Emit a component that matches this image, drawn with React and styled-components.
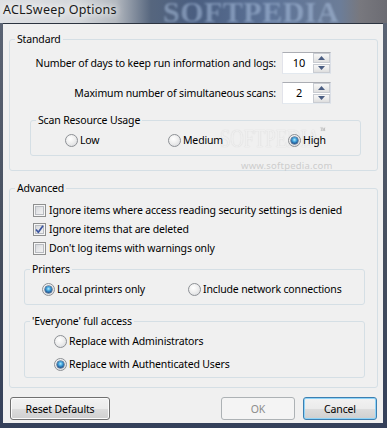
import React from 'react';
import styled, { createGlobalStyle } from 'styled-components';

const FONT = `"Segoe UI", "Noto Sans", "Open Sans", sans-serif`;

const Global = createGlobalStyle`
  html, body { margin: 0; padding: 0; background: #fff; }
  * { box-sizing: border-box; }
`;

const Window = styled.div`
  position: relative;
  width: 387px;
  height: 428px;
  display: flex;
  flex-direction: column;
  overflow: hidden;
  font-family: ${FONT};
  font-size: 10.5px;
  letter-spacing: -0.15px;
  line-height: 15px;
  color: #000;
  background: linear-gradient(180deg, #5d6676 0%, #454e5e 60%, #34405a 100%);
`;

const TitleBar = styled.div`
  position: relative;
  height: 23px;
  flex: none;
  display: flex;
  align-items: flex-start;
  padding: 2px 0 0 3px;
  overflow: hidden;
  background: linear-gradient(90deg, #dfe1e4 0%, #d3d6da 20%, #b3b8bf 30%, #56667e 39%, #4a5e80 50%, #5d7397 70%, #6c7d98 88%, #78787e 93%, #6c6c73 100%);
`;

const TitleText = styled.span`
  position: relative;
  font-size: 12.5px;
  letter-spacing: 0.2px;
  line-height: 16px;
  color: #1a1a1a;
  text-shadow: 0 0 6px #fff, 0 0 10px #fff;
`;

const TitleMark = styled.span`
  position: absolute;
  left: 163px;
  top: -5px;
  font-family: "Liberation Serif", serif;
  font-weight: bold;
  font-size: 30px;
  line-height: 34px;
  letter-spacing: 0.5px;
  color: rgba(175, 198, 228, 0.5);
  filter: blur(1.2px);
  white-space: nowrap;
`;

const Frame = styled.div`
  flex: 1;
  display: flex;
  padding: 0 4px 5px 3px;
`;

const Client = styled.div`
  flex: 1;
  display: flex;
  flex-direction: column;
  background: #f0f0f0;
  border-top: 1px solid #2c3440;
  padding: 8px 5px 3px 6px;
`;

const Group = styled.fieldset`
  margin: ${p => p.$mt || 0}px 0 0 0;
  padding: 0;
  border: 1px solid #d5dfe5;
  border-radius: 3px;
  min-width: 0;
`;

const Legend = styled.legend`
  margin-left: 5px;
  padding: 0 2px;
  line-height: 15px;
`;

const GroupBody = styled.div`
  display: flex;
  flex-direction: column;
  gap: ${p => p.$gap || 0}px;
  padding: ${p => p.$pad};
`;

const FieldRow = styled.div`
  display: flex;
  justify-content: flex-end;
  align-items: center;
  gap: 6px;
  padding-right: 30px;
  height: 22px;
  white-space: nowrap;
`;

const Spin = styled.div`
  width: 49px;
  height: 22px;
  display: flex;
  background: #fff;
  border: 1px solid;
  border-color: #abadb3 #dbdfe6 #e3e9ef #e2e3ea;
`;

const SpinValue = styled.div`
  flex: 1;
  text-align: center;
  font-size: 11px;
  line-height: 20px;
  padding-left: 2px;
`;

const SpinButtons = styled.div`
  width: 17px;
  display: flex;
  flex-direction: column;
  gap: 1px;
`;

const SpinBtn = styled.div`
  flex: 1;
  display: flex;
  align-items: center;
  justify-content: center;
  border: 1px solid #c9ccd2;
  background: linear-gradient(180deg, #f7f7f7 0%, #ececec 50%, #dedede 100%);
`;

const Arrow = ({ up }) => (
  <svg width="7" height="4" viewBox="0 0 7 4">
    <path d={up ? 'M0 4 L3.5 0 L7 4 Z' : 'M0 0 L3.5 4 L7 0 Z'} fill="#4a5d82" />
  </svg>
);

const Spinner = ({ value }) => (
  <Spin>
    <SpinValue>{value}</SpinValue>
    <SpinButtons>
      <SpinBtn><Arrow up /></SpinBtn>
      <SpinBtn><Arrow /></SpinBtn>
    </SpinButtons>
  </Spin>
);

const OptionGrid = styled.div`
  display: grid;
  grid-template-columns: ${p => p.$cols};
  row-gap: ${p => p.$rowGap || 0}px;
  padding-left: ${p => p.$left}px;
`;

const Option = styled.label`
  position: relative;
  z-index: 1;
  display: flex;
  align-items: center;
  gap: ${p => p.$gap}px;
  height: ${p => p.$h || 15}px;
  white-space: nowrap;
`;

const RadioDot = styled.span`
  flex: none;
  width: 13px;
  height: 13px;
  border-radius: 50%;
  border: 1px solid #8d9095;
  background: radial-gradient(circle at 40% 35%, #ffffff 0%, #f1f1f1 40%, #d4d6d9 100%);
  display: flex;
  align-items: center;
  justify-content: center;
  &::after {
    content: '';
    display: ${p => (p.$on ? 'block' : 'none')};
    width: 7px;
    height: 7px;
    border-radius: 50%;
    background: radial-gradient(circle at 50% 40%, #b4ecff 0%, #45a6dd 35%, #1d5592 70%, #163b66 100%);
    box-shadow: 0 0 0 0.5px #1b3e68;
  }
`;

const Radio = ({ on, children, gap = 2 }) => (
  <Option $gap={gap}>
    <RadioDot $on={on} />
    <span>{children}</span>
  </Option>
);

const CheckBox = styled.span`
  flex: none;
  width: 13px;
  height: 13px;
  border: 1px solid #8e8f8f;
  background: linear-gradient(135deg, #cdd0d4 0%, #e6e7e9 50%, #f7f7f7 100%);
  box-shadow: inset 0 0 0 1px #f6f6f6, inset 0 0 0 2px #b9bcc1;
  display: flex;
  align-items: center;
  justify-content: center;
`;

const Check = ({ on, children }) => (
  <Option $gap={3} $h={19}>
    <CheckBox>
      {on && (
        <svg width="11" height="11" viewBox="0 0 11 11">
          <path d="M2 5.5 L4.3 8.3 L9 1.8" fill="none" stroke="#3b55a0" strokeWidth="1.7" strokeLinejoin="round" />
        </svg>
      )}
    </CheckBox>
    <span>{children}</span>
  </Option>
);

const ButtonRow = styled.div`
  display: flex;
  align-items: center;
  gap: 8px;
  margin-top: 9px;
  padding: 0 1px;
`;

const Spacer = styled.div`
  flex: 1;
`;

const Button = styled.button`
  width: ${p => p.$w}px;
  height: 23px;
  padding: 0;
  font-family: ${FONT};
  font-size: 10.5px;
  letter-spacing: -0.15px;
  color: ${p => (p.$disabled ? '#8d8d8d' : '#000')};
  border-radius: 3px;
  border: 1px solid ${p => (p.$default ? '#3c7fb1' : p.$disabled ? '#adb2b5' : '#707070')};
  background: ${p => (p.$disabled
    ? '#f4f4f4'
    : 'linear-gradient(180deg, #f2f2f2 0%, #ebebeb 50%, #dddddd 51%, #cfcfcf 100%)')};
  box-shadow: ${p => (p.$default
    ? 'inset 0 0 0 1px #8fd4f8'
    : p.$disabled ? 'none' : 'inset 0 0 0 1px #fbfbfb')};
`;

const Watermark = styled.div`
  position: absolute;
  left: 220px;
  top: 126px;
  font-family: "Liberation Serif", serif;
  font-size: 26px;
  line-height: 26px;
  color: rgba(255, 255, 255, 0.7);
  text-shadow: 0 0 1px rgba(140, 140, 140, 0.45);
  transform: scaleX(0.72);
  transform-origin: left top;
  pointer-events: none;
  white-space: nowrap;
  sup {
    font-size: 8px;
    vertical-align: top;
    line-height: 10px;
    color: rgba(150, 150, 150, 0.6);
  }
`;

const WatermarkUrl = styled.div`
  position: absolute;
  left: 241px;
  top: 158px;
  font-size: 9.5px;
  color: rgba(195, 195, 195, 0.8);
  letter-spacing: 0.2px;
  pointer-events: none;
`;

export default function App() {
  return (
    <>
      <Global />
      <Window>
        <TitleBar>
          <TitleMark>SOFTPEDIA</TitleMark>
          <TitleText>ACLSweep Options</TitleText>
        </TitleBar>
        <Frame>
          <Client>
            <Group>
              <Legend>Standard</Legend>
              <GroupBody $pad="5px 16px 14px 20px" $gap={8}>
                <FieldRow>
                  <span>Number of days to keep run information and logs:</span>
                  <Spinner value="10" />
                </FieldRow>
                <FieldRow>
                  <span>Maximum number of simultaneous scans:</span>
                  <Spinner value="2" />
                </FieldRow>
                <Group $mt={1}>
                  <Legend>Scan Resource Usage</Legend>
                  <GroupBody $pad="5px 0 7px 0">
                    <OptionGrid $cols="103px 120px 1fr" $left={34}>
                      <Radio>Low</Radio>
                      <Radio>Medium</Radio>
                      <Radio on>High</Radio>
                    </OptionGrid>
                  </GroupBody>
                </Group>
              </GroupBody>
            </Group>

            <Group $mt={10}>
              <Legend>Advanced</Legend>
              <GroupBody $pad="5px 12px 9px 14px">
                <OptionGrid $cols="1fr" $left={9}>
                  <Check>Ignore items where access reading security settings is denied</Check>
                  <Check on>Ignore items that are deleted</Check>
                  <Check>Don't log items with warnings only</Check>
                </OptionGrid>
                <Group $mt={4}>
                  <Legend>Printers</Legend>
                  <GroupBody $pad="5px 0 7px 0">
                    <OptionGrid $cols="146px 1fr" $left={17}>
                      <Radio on>Local printers only</Radio>
                      <Radio>Include network connections</Radio>
                    </OptionGrid>
                  </GroupBody>
                </Group>
                <Group $mt={9}>
                  <Legend>'Everyone' full access</Legend>
                  <GroupBody $pad="5px 0 5px 0">
                    <OptionGrid $cols="1fr" $left={29} $rowGap={8}>
                      <Radio>Replace with Administrators</Radio>
                      <Radio on>Replace with Authenticated Users</Radio>
                    </OptionGrid>
                  </GroupBody>
                </Group>
              </GroupBody>
            </Group>

            <ButtonRow>
              <Button $w={100}>Reset Defaults</Button>
              <Spacer />
              <Button $w={74} $disabled disabled>OK</Button>
              <Button $w={74} $default>Cancel</Button>
            </ButtonRow>
          </Client>
        </Frame>
        <Watermark>SOFTPEDIA<sup>™</sup></Watermark>
        <WatermarkUrl>www.softpedia.com</WatermarkUrl>
      </Window>
    </>
  );
}
